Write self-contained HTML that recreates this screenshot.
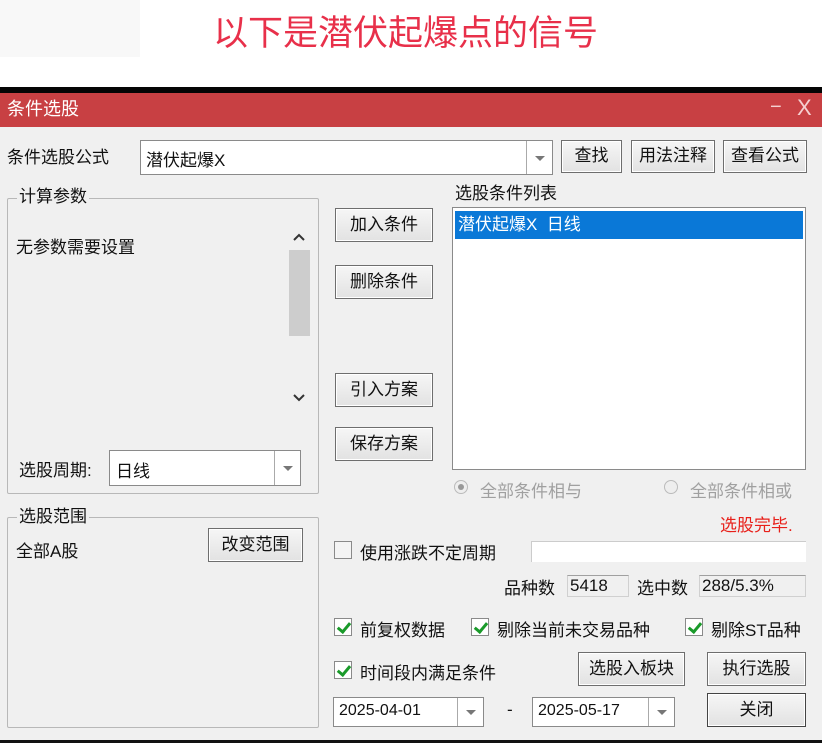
<!DOCTYPE html>
<html><head><meta charset="utf-8"><style>
*{margin:0;padding:0;box-sizing:border-box}
body{width:822px;height:743px;position:relative;background:#fff;font-family:"Liberation Sans","Noto Sans CJK SC",sans-serif;font-size:17px;color:#111;overflow:hidden}
.a{position:absolute;white-space:nowrap}
.btn{position:absolute;background:linear-gradient(#f6f6f6,#e2e2e2);border:1px solid #6e6e6e;box-shadow:inset 0 0 0 1px #fff;text-align:center;font-size:17px}
.grp{position:absolute;border:1px solid #b8b8b8;border-radius:2px}
.lbl{position:absolute;background:#f0f0f0;padding:0 2px;font-size:17px;line-height:20px}
.cb{position:absolute;width:18px;height:18px;border:1px solid #8a8a8a;background:#fff}
.cb.on::after{content:"";position:absolute;left:5px;top:1px;width:5px;height:10px;border:solid #1a9a2a;border-width:0 3px 3px 0;transform:rotate(40deg)}
.cmb{position:absolute;background:#fff;border:1px solid #8a8a8a}
.arr{position:absolute;top:0;bottom:0;width:26px;border-left:1px solid #aaa}
.arr::after{content:"";position:absolute;left:8px;top:50%;margin-top:-2px;border:5px solid transparent;border-top:5px solid #777;border-bottom:0}
.box{position:absolute;border:1px solid #d0d0d0;border-top-color:#a0a0a0;background:#f0f0f0;font-size:17px;padding-left:2px}
</style></head><body>
<div class="a" style="left:0;top:0;width:140px;height:57px;background:#f8f8f8"></div>
<div class="a" style="left:213px;top:12px;font-size:35px;color:#e8304a;line-height:44px">以下是潜伏起爆点的信号</div>
<div class="a" style="left:0;top:87px;width:822px;height:7px;background:#050505"></div>
<div class="a" style="left:0;top:93px;width:822px;height:34px;background:#c84043"></div>
<div class="a" style="left:7px;top:96px;color:#fff;font-size:18px;line-height:26px">条件选股</div>
<div class="a" style="left:770px;top:96px;color:#f5d0d0;font-size:20px">−</div>
<div class="a" style="left:797px;top:95px;color:#f5d0d0;font-size:22px;font-weight:300">X</div>
<div class="a" style="left:0;top:127px;width:822px;height:614px;background:#f0f0f0"></div>
<div class="a" style="left:0;top:740px;width:822px;height:3px;background:#111"></div>

<div class="a" style="left:7px;top:143px">条件选股公式</div>
<div class="cmb" style="left:140px;top:140px;width:413px;height:35px"><span class="a" style="left:5px;top:5px">潜伏起爆X</span><div class="arr" style="right:0"></div></div>
<div class="btn" style="left:561px;top:140px;width:61px;height:33px;line-height:30px">查找</div>
<div class="btn" style="left:631px;top:140px;width:84px;height:33px;line-height:30px">用法注释</div>
<div class="btn" style="left:723px;top:140px;width:84px;height:33px;line-height:30px">查看公式</div>

<div class="grp" style="left:7px;top:198px;width:312px;height:296px"></div>
<div class="lbl" style="left:17px;top:187px">计算参数</div>
<div class="a" style="left:16px;top:233px">无参数需要设置</div>
<div class="a" style="left:287px;top:224px;width:24px;height:186px;background:#f0f0f0"></div>
<div class="a" style="left:289px;top:250px;width:21px;height:86px;background:#cdcdcd"></div>
<svg class="a" style="left:292px;top:232px" width="14" height="10"><path d="M2 8 L7 3 L12 8" stroke="#333" stroke-width="2" fill="none"/></svg>
<svg class="a" style="left:292px;top:393px" width="14" height="10"><path d="M2 2 L7 7 L12 2" stroke="#333" stroke-width="2" fill="none"/></svg>
<div class="a" style="left:19px;top:456px">选股周期:</div>
<div class="cmb" style="left:109px;top:450px;width:192px;height:36px"><span class="a" style="left:6px;top:6px">日线</span><div class="arr" style="right:0"></div></div>

<div class="btn" style="left:335px;top:208px;width:98px;height:34px;line-height:31px">加入条件</div>
<div class="btn" style="left:335px;top:265px;width:98px;height:34px;line-height:31px">删除条件</div>
<div class="btn" style="left:335px;top:373px;width:98px;height:34px;line-height:31px">引入方案</div>
<div class="btn" style="left:335px;top:427px;width:98px;height:34px;line-height:31px">保存方案</div>

<div class="a" style="left:455px;top:179px">选股条件列表</div>
<div class="a" style="left:452px;top:207px;width:354px;height:263px;background:#fff;border:1px solid #8a8a8a"></div>
<div class="a" style="left:455px;top:211px;width:348px;height:28px;background:#0a78d7;color:#fff;padding-left:3px;line-height:27px">潜伏起爆X&nbsp; 日线</div>

<div class="a" style="left:454px;top:480px;width:14px;height:14px;border-radius:50%;border:1px solid #bbb;background:#eee"><div style="position:absolute;left:3px;top:3px;width:6px;height:6px;border-radius:50%;background:#999"></div></div>
<div class="a" style="left:480px;top:477px;color:#a0a0a0">全部条件相与</div>
<div class="a" style="left:664px;top:480px;width:14px;height:14px;border-radius:50%;border:1px solid #bbb;background:#eee"></div>
<div class="a" style="left:690px;top:477px;color:#a0a0a0">全部条件相或</div>
<div class="a" style="left:720px;top:511px;color:#e8201a">选股完毕.</div>

<div class="grp" style="left:7px;top:517px;width:312px;height:211px"></div>
<div class="lbl" style="left:17px;top:507px">选股范围</div>
<div class="a" style="left:16px;top:537px">全部A股</div>
<div class="btn" style="left:208px;top:528px;width:95px;height:34px;line-height:31px">改变范围</div>

<div class="cb" style="left:334px;top:541px;background:#f4f4f4"></div>
<div class="a" style="left:360px;top:539px">使用涨跌不定周期</div>
<div class="a" style="left:531px;top:541px;width:275px;height:21px;background:#fff;border-left:1px solid #ccc;border-top:1px solid #ccc"></div>
<div class="a" style="left:504px;top:574px">品种数</div>
<div class="box" style="left:567px;top:575px;width:62px;height:22px;line-height:20px">5418</div>
<div class="a" style="left:637px;top:574px">选中数</div>
<div class="box" style="left:699px;top:575px;width:107px;height:22px;line-height:20px">288/5.3%</div>

<div class="cb on" style="left:334px;top:618px"></div>
<div class="a" style="left:360px;top:616px">前复权数据</div>
<div class="cb on" style="left:471px;top:618px"></div>
<div class="a" style="left:497px;top:616px">剔除当前未交易品种</div>
<div class="cb on" style="left:685px;top:618px"></div>
<div class="a" style="left:711px;top:616px">剔除ST品种</div>
<div class="cb on" style="left:334px;top:661px"></div>
<div class="a" style="left:360px;top:659px">时间段内满足条件</div>
<div class="btn" style="left:578px;top:652px;width:107px;height:34px;line-height:31px">选股入板块</div>
<div class="btn" style="left:707px;top:652px;width:99px;height:34px;line-height:31px">执行选股</div>

<div class="cmb" style="left:333px;top:697px;width:151px;height:30px"><span class="a" style="left:5px;top:4px;font-size:16px">2025-04-01</span><div class="arr" style="right:0"></div></div>
<div class="a" style="left:507px;top:700px">-</div>
<div class="cmb" style="left:532px;top:697px;width:143px;height:30px"><span class="a" style="left:5px;top:4px;font-size:16px">2025-05-17</span><div class="arr" style="right:0"></div></div>
<div class="btn" style="left:707px;top:693px;width:99px;height:34px;line-height:31px;border-color:#444">关闭</div>
</body></html>
